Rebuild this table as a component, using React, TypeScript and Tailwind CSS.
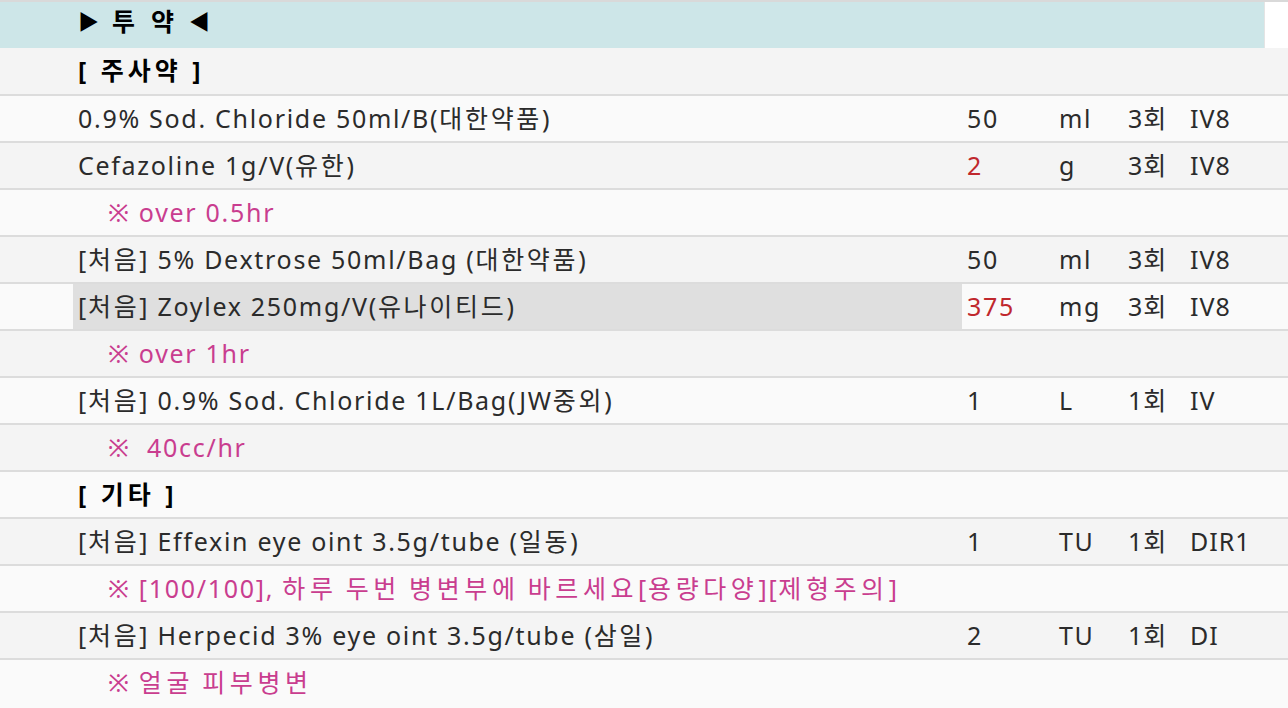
import React from 'react'

type Row =
  | { kind: 'section'; label: string }
  | { kind: 'drug'; name: string; qty: string; unit: string; count: string; route: string; red?: boolean; selected?: boolean }
  | { kind: 'note'; text: string }

const rows: Row[] = [
  { kind: 'section', label: '[ 주사약 ]' },
  { kind: 'drug', name: '0.9% Sod. Chloride 50ml/B(대한약품)', qty: '50', unit: 'ml', count: '3회', route: 'IV8' },
  { kind: 'drug', name: 'Cefazoline 1g/V(유한)', qty: '2', unit: 'g', count: '3회', route: 'IV8', red: true },
  { kind: 'note', text: '※ over 0.5hr' },
  { kind: 'drug', name: '[처음] 5% Dextrose 50ml/Bag (대한약품)', qty: '50', unit: 'ml', count: '3회', route: 'IV8' },
  { kind: 'drug', name: '[처음] Zoylex 250mg/V(유나이티드)', qty: '375', unit: 'mg', count: '3회', route: 'IV8', red: true, selected: true },
  { kind: 'note', text: '※ over 1hr' },
  { kind: 'drug', name: '[처음] 0.9% Sod. Chloride 1L/Bag(JW중외)', qty: '1', unit: 'L', count: '1회', route: 'IV' },
  { kind: 'note', text: '※  40cc/hr' },
  { kind: 'section', label: '[ 기타 ]' },
  { kind: 'drug', name: '[처음] Effexin eye oint 3.5g/tube (일동)', qty: '1', unit: 'TU', count: '1회', route: 'DIR1' },
  { kind: 'note', text: '※ [100/100], 하루 두번 병변부에 바르세요[용량다양][제형주의]' },
  { kind: 'drug', name: '[처음] Herpecid 3% eye oint 3.5g/tube (삼일)', qty: '2', unit: 'TU', count: '1회', route: 'DI' },
  { kind: 'note', text: '※ 얼굴 피부병변' },
]

// hangul runs get more spacing than latin, like the original font
function Txt({ text, note }: { text: string; note?: boolean }) {
  const parts = text.split(/([\uac00-\ud7a3]+)/)
  return (
    <span className="whitespace-pre">
      {parts.map((p, i) =>
        /[\uac00-\ud7a3]/.test(p) ? (
          <span key={i} className={note ? 'tracking-[4.6px]' : 'tracking-[2.7px]'}>{p}</span>
        ) : (
          <span key={i}>{p}</span>
        )
      )}
    </span>
  )
}

export default function App() {
  return (
    <div
      className="w-[1288px] h-[708px] overflow-hidden bg-[#fafafa] text-[25px] tracking-[1.7px] text-[#2b2b2b]"
      style={{ fontFamily: '"Noto Sans", "Noto Sans CJK KR", sans-serif' }}
    >
      {/* header */}
      <div className="flex h-[48px] border-t-2 border-[#d9d9d9] bg-[#cde6e8]">
        <div className="flex flex-1 items-center pb-[6px] pl-[78px] text-[25px] font-bold tracking-normal text-black">
          <span className="text-[21px]">▶</span>
          <span className="ml-[13px]">투</span>
          <span className="ml-[16px]">약</span>
          <span className="ml-[15px] text-[21px]">◀</span>
        </div>
        <div className="w-[24px] border-l border-[#e4e4e4] bg-white" />
      </div>

      {rows.map((row, i) => {
        const bg = i % 2 === 0 ? 'bg-[#f4f4f4]' : 'bg-[#fafafa]'
        const border = i === 0 ? 'h-[46px]' : 'h-[47px] border-t-2 border-[#dcdcdc]'
        if (row.kind === 'section') {
          return (
            <div key={i} className={`flex items-center pl-[78px] font-bold tracking-[4px] text-black whitespace-pre ${bg} ${border}`}>
              {row.label}
            </div>
          )
        }
        if (row.kind === 'note') {
          return (
            <div key={i} className={`flex items-center pl-[108px] whitespace-nowrap text-[#c93d8f] ${bg} ${border}`}>
              <Txt text={row.text} note />
            </div>
          )
        }
        return (
          <div key={i} className={`flex pl-[73px] ${bg} ${border}`}>
            <div className={`flex w-[889px] items-center pl-[5px] ${row.selected ? 'bg-[#dfdfdf]' : ''}`}>
              <Txt text={row.name} />
            </div>
            <div className={`flex w-[92px] items-center pl-[5px] ${row.red ? 'text-[#c0282d]' : ''}`}>{row.qty}</div>
            <div className="flex w-[69px] items-center pl-[5px]">{row.unit}</div>
            <div className="flex w-[62px] items-center pl-[5px] tracking-[1px]">
              <Txt text={row.count} />
            </div>
            <div className="flex items-center pl-[5px] tracking-[1px]">{row.route}</div>
          </div>
        )
      })}
    </div>
  )
}
